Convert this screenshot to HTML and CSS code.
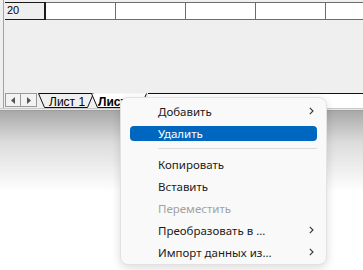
FILE: index.html
```html
<!DOCTYPE html>
<html>
<head>
<meta charset="utf-8">
<link rel="stylesheet" href="styles.css">
</head>
<body>
<div class="window">
  <div class="sheet">
    <div class="row">
      <div class="rh">20</div>
      <div class="cell"></div>
      <div class="cell"></div>
      <div class="cell"></div>
      <div class="cell"></div>
      <div class="cell last"></div>
    </div>
  </div>
  <div class="tabbar">
    <div class="nav">
      <div class="navbtn"><svg width="5" height="7" viewBox="0 0 5 7"><path d="M4 0 L0 3.5 L4 7 Z" fill="#555"/></svg></div>
      <div class="navbtn"><svg width="5" height="7" viewBox="0 0 5 7"><path d="M1 0 L5 3.5 L1 7 Z" fill="#555"/></svg></div>
    </div>
    <div class="tabs">
      <svg class="tabshape" width="110" height="15" viewBox="0 0 110 15">
        <path d="M0.5 0.5 L6.5 14.5 L49.5 14.5 L55.5 0.5 Z" fill="#f0f0f0" stroke="#111" stroke-width="1"/>
        <path d="M53.5 0.5 L59.5 14.5 L102.5 14.5 L108.5 0.5" fill="#fff" stroke="#111" stroke-width="1"/>
      </svg>
      <span class="tab t1">Лист 1</span>
      <span class="tab t2">Лист 2</span>
    </div>
    <div class="strip"></div>
  </div>
  <div class="edge"></div>
</div>
<div class="shadow"></div>

<div class="menu">
  <div class="item"><span>Добавить</span><svg class="chev" width="5" height="8" viewBox="0 0 5 8"><path d="M0.8 0.8 L4 4 L0.8 7.2" fill="none" stroke="#333" stroke-width="1.1"/></svg></div>
  <div class="item active"><span>Удалить</span></div>
  <div class="sep"></div>
  <div class="item"><span>Копировать</span></div>
  <div class="item"><span>Вставить</span></div>
  <div class="item disabled"><span>Переместить</span></div>
  <div class="item"><span>Преобразовать в ...</span><svg class="chev" width="5" height="8" viewBox="0 0 5 8"><path d="M0.8 0.8 L4 4 L0.8 7.2" fill="none" stroke="#333" stroke-width="1.1"/></svg></div>
  <div class="item"><span>Импорт данных из...</span><svg class="chev" width="5" height="8" viewBox="0 0 5 8"><path d="M0.8 0.8 L4 4 L0.8 7.2" fill="none" stroke="#333" stroke-width="1.1"/></svg></div>
</div>
</body>
</html>
```
FILE: styles.css
```css
* { box-sizing: border-box; }
html, body { margin: 0; padding: 0; background: #fff; }
body { width: 363px; height: 270px; overflow: hidden; position: relative; font-family: "Liberation Sans", Arial, sans-serif; }

.window { height: 111px; background: #efefef; }
.sheet { height: 93px; margin-left: 3px; border-left: 1px solid #a3a3a3; padding-left: 1px; padding-top: 2px; }
.row { display: flex; height: 18px; }
.rh { width: 41px; flex: none; background: #efefef; border: 1px solid #1c1c1c; border-left: none; border-right-width: 2px; font-size: 11px; line-height: 15px; padding-left: 2px; color: #000; }
.cell { width: 70px; flex: none; background: #fff; border-top: 1px solid #6d6d6d; border-bottom: 1px solid #6d6d6d; border-right: 1px solid #6d6d6d; }
.cell.last { width: 40px; border-right: none; }

.tabbar { height: 15px; display: flex; }
.nav { flex: none; display: flex; padding-left: 1px; background: #efefef; border-left: 1px solid #a3a3a3; margin-left: 3px; width: 35px; }
.navbtn { width: 16px; height: 14px; border: 1px solid #9a9a9a; background: #f3f3f3; display: flex; align-items: center; justify-content: center; }
.navbtn + .navbtn { border-left: none; }
.tabs { width: 110px; flex: none; position: relative; height: 15px; }
.tabshape { position: absolute; left: 0; top: 0; }
.tab { position: absolute; top: 3px; font-size: 12px; line-height: 12px; color: #000; }
.t1 { left: 11px; }
.t2 { left: 60px; font-weight: bold; }
.strip { flex: 1; background: #fff; border-top: 1px solid #111; }
.edge { height: 3px; border-top: 1px solid #c9c9c9; background: #e6eaf2; border-bottom: 1px solid #9d9d9d; }
.shadow { height: 90px; background: linear-gradient(#a9a9a9, #dcdcdc 35%, #fff 90%); }

.menu { position: absolute; left: 120px; top: 97px; width: 207px; height: 168px; background: #f9f9f9; border: 1px solid #e2e2e2; border-radius: 8px; box-shadow: 0 3px 10px rgba(0,0,0,0.14); padding: 2px 9px 3px 9px; font-family: "Noto Sans", "Open Sans", sans-serif; font-size: 11.5px; color: #1b1b1b; }
.item { height: 22px; display: flex; align-items: center; justify-content: space-between; padding-left: 28px; padding-right: 3px; position: relative; }
.item span { position: relative; }
.item.active::before { content: ""; position: absolute; left: 0; right: 0; top: 4px; bottom: 3px; background: #0067c0; border-radius: 4px; }
.item.active { color: #fff; }
.item.disabled { color: #a2a2a2; }
.chev { position: relative; }
.sep { height: 9px; margin-left: 28px; position: relative; }
.sep::before { content: ""; position: absolute; left: 0; right: 0; top: 4px; height: 1px; background: #dcdcdc; }
```
